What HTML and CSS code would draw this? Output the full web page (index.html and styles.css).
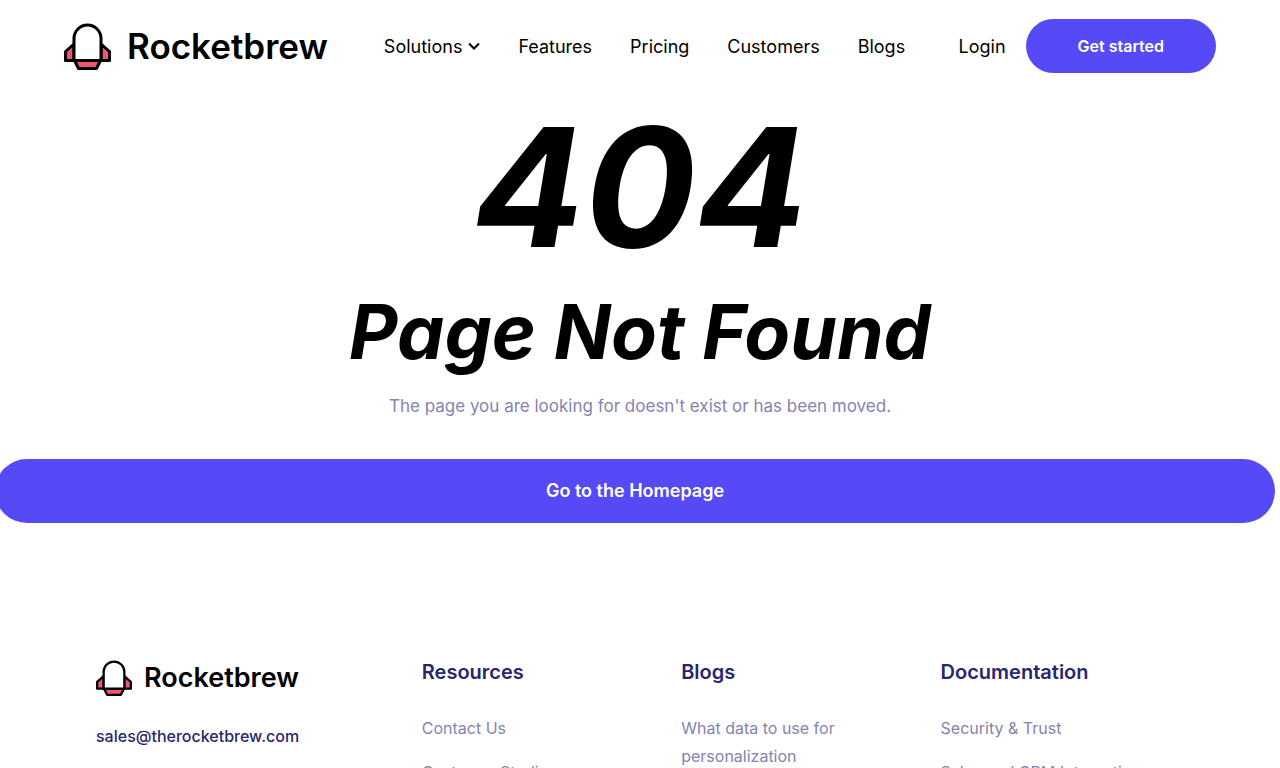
FILE: index.html
```html
<!DOCTYPE html>
<html lang="en">
  <head>
    <meta charset="UTF-8" />
    <meta name="viewport" content="width=device-width, initial-scale=1.0" />
    <title>Page Not Found | Rocketbrew</title>
    <link rel="stylesheet" href="styles.css">
  </head>
  <body>
    <svg class="sprite" aria-hidden="true">
      <symbol id="rocket" viewBox="0 0 47 47">
        <path d="M10 21 L1.5 28.500 V37.500 H10 Z M37 21 L45.500 28.500 V37.500 H37 Z" fill="#ef5570" stroke="#000" stroke-width="3" stroke-linejoin="round" />
        <path d="M10.500 37.500 L14.500 45.500 H32.500 L36.500 37.500 Z" fill="#ef5570" stroke="#000" stroke-width="3" stroke-linejoin="round" />
        <path d="M10 37.500 V15.500 A13.500 13.500 0 0 1 37 15.500 V37.500 Z" fill="#fff" stroke="#000" stroke-width="3" stroke-linejoin="round" />
      </symbol>
    </svg>

    <header class="header">
      <a href="#" class="logo">
        <svg class="logo-icon"><use href="#rocket" /></svg>
        <span>Rocketbrew</span>
      </a>
      <nav class="nav">
        <button type="button" class="nav-dropdown">
          Solutions
          <svg class="chevron" viewBox="0 0 12 12"><path d="M1 3.500 L6 8.500 L11 3.500" fill="none" stroke="#000" stroke-width="2" /></svg>
        </button>
        <a href="#">Features</a>
        <a href="#">Pricing</a>
        <a href="#">Customers</a>
        <a href="#">Blogs</a>
      </nav>
      <div class="header-actions">
        <a href="#">Login</a>
        <a href="#" class="button">Get started</a>
      </div>
    </header>

    <main class="not-found">
      <h1>404</h1>
      <h2>Page Not Found</h2>
      <p>The page you are looking for doesn't exist or has been moved.</p>
      <a href="#" class="button button-home">Go to the Homepage</a>
    </main>

    <footer class="footer">
      <div>
        <a href="#" class="logo logo-small">
          <svg class="logo-icon"><use href="#rocket" /></svg>
          <span>Rocketbrew</span>
        </a>
        <a href="mailto:sales@therocketbrew.com" class="email">sales@therocketbrew.com</a>
      </div>
      <div>
        <h3>Resources</h3>
        <ul>
          <li><a href="#">Contact Us</a></li>
          <li><a href="#">Customer Studies</a></li>
        </ul>
      </div>
      <div>
        <h3>Blogs</h3>
        <ul>
          <li><a href="#">What data to use for personalization</a></li>
        </ul>
      </div>
      <div>
        <h3>Documentation</h3>
        <ul>
          <li><a href="#">Security &amp; Trust</a></li>
          <li><a href="#">Sales and CRM Integrations</a></li>
        </ul>
      </div>
    </footer>
  </body>
</html>
```
FILE: styles.css
```css
* {
  box-sizing: border-box;
}
body {
  margin: 0;
  font-family: Inter, "Liberation Sans", sans-serif;
  font-size: 18px;
  color: #000;
  background-color: #fff;
  overflow-x: hidden;
}
a {
  color: inherit;
  text-decoration: none;
}
.sprite {
  display: none;
}
.header {
  display: flex;
  align-items: center;
  padding: 19px 64px;
}
.logo {
  display: flex;
  align-items: center;
  gap: 16px;
  font-size: 35px;
  line-height: 47px;
  font-weight: 600;
}
.logo-icon {
  width: 47px;
  height: 47px;
}
.nav {
  display: flex;
  gap: 38px;
  margin-left: 56px;
}
.nav-dropdown {
  display: flex;
  align-items: center;
  gap: 6px;
  padding: 0;
  border: none;
  background: none;
  color: inherit;
  font: inherit;
  cursor: pointer;
}
.chevron {
  width: 12px;
  height: 12px;
}
.header-actions {
  display: flex;
  align-items: center;
  gap: 20px;
  margin-left: auto;
}
.button {
  padding: 0 52px;
  border-radius: 32px;
  background-color: #564af7;
  color: #fff;
  font-size: 16px;
  line-height: 54px;
  font-weight: 600;
  text-align: center;
  white-space: nowrap;
}
.not-found {
  text-align: center;
}
h1,
h2 {
  margin: 0;
  font-style: italic;
  font-weight: 700;
}
h1 {
  font-size: 165px;
  line-height: 190px;
}
h2 {
  font-size: 75px;
  line-height: 100px;
}
.not-found p {
  margin: 8px 0 37px;
  color: #8583ae;
  font-size: 17px;
  line-height: 32px;
}
.button-home {
  display: block;
  width: 100%;
  margin-left: -5px;
  font-size: 18px;
  line-height: 64px;
}
.footer {
  display: grid;
  grid-template-columns: 14fr 11fr 11fr 11fr;
  gap: 16px;
  padding: 137px 96px 64px;
  font-size: 16px;
  line-height: 28px;
  color: #8583ae;
}
.logo-small {
  gap: 12px;
  font-size: 27px;
  line-height: 36px;
  color: #000;
}
.logo-small .logo-icon {
  width: 36px;
  height: 36px;
}
.email {
  display: block;
  margin-top: 26px;
  color: #29256f;
  font-weight: 500;
}
.footer h3 {
  margin: 0 0 30px;
  color: #29256f;
  font-size: 20px;
  line-height: 24px;
  font-weight: 600;
}
.footer ul {
  margin: 0;
  padding: 0;
  list-style: none;
}
.footer li {
  margin-bottom: 16px;
}
```
